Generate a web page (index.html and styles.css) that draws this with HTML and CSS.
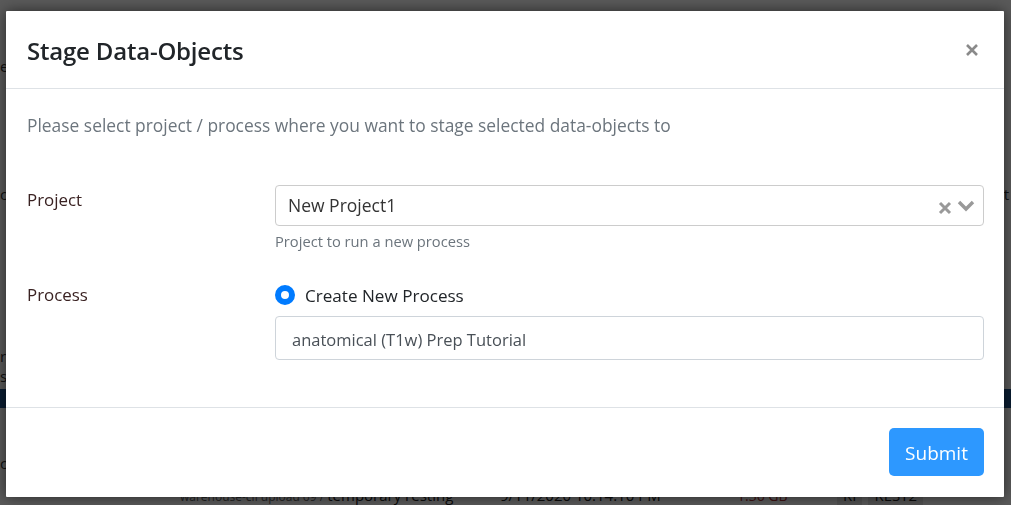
FILE: index.html
```html
<!DOCTYPE html>
<html>
<head>
<meta charset="utf-8">
<link rel="stylesheet" href="styles.css">
</head>
<body>
<div class="page">
  <div class="bg-row bg-r1"><span>e</span></div>
  <div class="bg-row bg-r2"><span>c</span><span class="bg-right">t</span></div>
  <div class="bg-row bg-r3"><span>rp</span></div>
  <div class="bg-row bg-r4"><span>ss</span></div>
  <div class="bg-bar"></div>
  <div class="bg-row bg-r5"><span>c</span></div>
  <div class="bg-table">
    <span class="bg-path"><small>warehouse-cli upload 69 / </small>temporary resting</span>
    <span class="bg-date">9/11/2020 10:14:10 PM</span>
    <span class="bg-size">1.36 GB</span>
    <span class="bg-tag">RI</span>
    <span class="bg-res">REST2</span>
  </div>
</div>
<div class="backdrop">
  <div class="modal">
    <div class="modal-header">
      <h5 class="modal-title">Stage Data-Objects</h5>
      <button class="close" aria-label="Close">
        <svg width="14" height="14" viewBox="0 0 14 14"><path d="M2 2 L12 12 M12 2 L2 12" stroke="#8a8a8a" stroke-width="2.6" stroke-linecap="butt"/></svg>
      </button>
    </div>
    <div class="modal-body">
      <p class="intro">Please select project / process where you want to stage selected data-objects to</p>
      <div class="form-row row-project">
        <label class="form-label">Project</label>
        <div class="form-control-col">
          <div class="select">
            <span class="select-value">New Project1</span>
            <span class="select-icons">
              <svg class="ic-clear" width="14" height="14" viewBox="0 0 14 14"><path d="M2 2 L12 12 M12 2 L2 12" stroke="#999" stroke-width="3"/></svg>
              <svg class="ic-chev" width="18" height="14" viewBox="0 0 18 14"><path d="M2 3 L9 10 L16 3" stroke="#999" stroke-width="3.4" fill="none"/></svg>
            </span>
          </div>
          <div class="help">Project to run a new process</div>
        </div>
      </div>
      <div class="form-row row-process">
        <label class="form-label">Process</label>
        <div class="form-control-col">
          <div class="radio-line">
            <span class="radio"></span>
            <span class="radio-label">Create New Process</span>
          </div>
          <div class="text-input">anatomical (T1w) Prep Tutorial</div>
        </div>
      </div>
    </div>
    <div class="modal-footer">
      <button class="btn-submit">Submit</button>
    </div>
  </div>
</div>
</body>
</html>
```
FILE: styles.css
```css
* { box-sizing: border-box; }
html, body { margin: 0; padding: 0; }
body {
  width: 1011px;
  height: 505px;
  overflow: hidden;
  font-family: "Open Sans", "Noto Sans", "Liberation Sans", sans-serif;
  background: #fff;
  color: #212529;
}
.page {
  width: 1011px;
  height: 505px;
  display: flex;
  flex-direction: column;
  font-size: 15px;
  color: #333;
}
.bg-row { display: flex; justify-content: space-between; height: 20px; line-height: 20px; padding: 0 2px 0 0; }
.bg-r1 { margin-top: 56px; }
.bg-r2 { margin-top: 108px; }
.bg-r3 { margin-top: 142px; }
.bg-r4 { margin-top: 0; }
.bg-right { margin-left: auto; margin-right: 0; }
.bg-bar { height: 20px; background: #1c4f8a; margin-top: 3px; }
.bg-row.bg-r5 { margin-top: 45px; }
.bg-table { display: flex; align-items: baseline; margin-top: 12px; font-size: 15px; color: #222; }
.bg-path { margin-left: 180px; width: 320px; }
.bg-path small { font-size: 12px; color: #666; }
.bg-date { width: 237px; }
.bg-size { width: 100px; color: #b03030; font-size: 14px; }
.bg-tag { background: #e4e4e4; padding: 0 6px; margin-right: 6px; }
.bg-res { background: #e4e4e4; padding: 0 6px; }

.backdrop {
  position: fixed;
  inset: 0;
  background: rgba(0, 0, 0, 0.65);
  padding: 11px 7px 8px 6px;
}
.modal {
  width: 998px;
  height: 486px;
  background: #fff;
  border-radius: 1px;
  box-shadow: 0 0 14px rgba(0, 0, 0, 0.55);
  display: flex;
  flex-direction: column;
}
.modal-header {
  display: flex;
  align-items: center;
  justify-content: space-between;
  padding: 21px 25px 19px 21px;
  border-bottom: 1px solid #dee2e6;
}
.modal-title {
  margin: 0;
  font-size: 24px;
  line-height: 37px;
  font-weight: 600;
  color: #212529;
  letter-spacing: -0.2px;
}
.close {
  border: 0;
  background: none;
  padding: 0;
  width: 14px;
  height: 14px;
  display: block;
  margin-top: -2px;
}
.close svg { display: block; }
.modal-body {
  padding: 24px 20px 48px 21px;
  flex: none;
}
.intro {
  margin: 0;
  font-size: 17.4px;
  line-height: 24px;
  color: #6c757d;
}
.form-row { display: flex; }
.row-project { margin-top: 48px; }
.row-process { margin-top: 32px; }
.form-label {
  width: 248px;
  font-size: 16.9px;
  line-height: 24px;
  color: #3a2222;
}
.row-project .form-label { padding-top: 3px; }
.form-control-col { flex: 1; }
.select {
  height: 41px;
  border: 1px solid #ccc;
  border-radius: 4px;
  display: flex;
  align-items: center;
  padding: 0 8px 1px 12px;
}
.select-value { flex: 1; font-size: 17.5px; color: #333; }
.select-icons { display: flex; align-items: center; gap: 5px; margin-top: 1px; }
.ic-clear { margin-top: 4px; }
.help {
  margin-top: 5px;
  font-size: 14.7px;
  line-height: 20px;
  color: #6c757d;
}
.radio-line { display: flex; align-items: center; height: 24px; }
.radio {
  width: 20px;
  height: 20px;
  border-radius: 50%;
  background: #fff;
  border: 6px solid #007bff;
  margin-right: 10px;
}
.radio-label { font-size: 17.1px; color: #212529; }
.text-input {
  margin-top: 9px;
  height: 44px;
  border: 1px solid #ced4da;
  border-radius: 4px;
  padding: 2px 16px 0;
  display: flex;
  align-items: center;
  font-size: 16.5px;
  color: #495057;
}
.modal-body { padding-bottom: 47px; }
.modal-footer {
  border-top: 1px solid #dee2e6;
  padding: 20px 20px 0 0;
  display: flex;
  justify-content: flex-end;
}
.btn-submit {
  height: 48px;
  width: 95px;
  border: 0;
  border-radius: 5px;
  background: #2d98ff;
  color: #fff;
  font-family: "Open Sans", "Noto Sans", sans-serif;
  font-size: 19px;
  padding: 2px 0 0;
}
```
